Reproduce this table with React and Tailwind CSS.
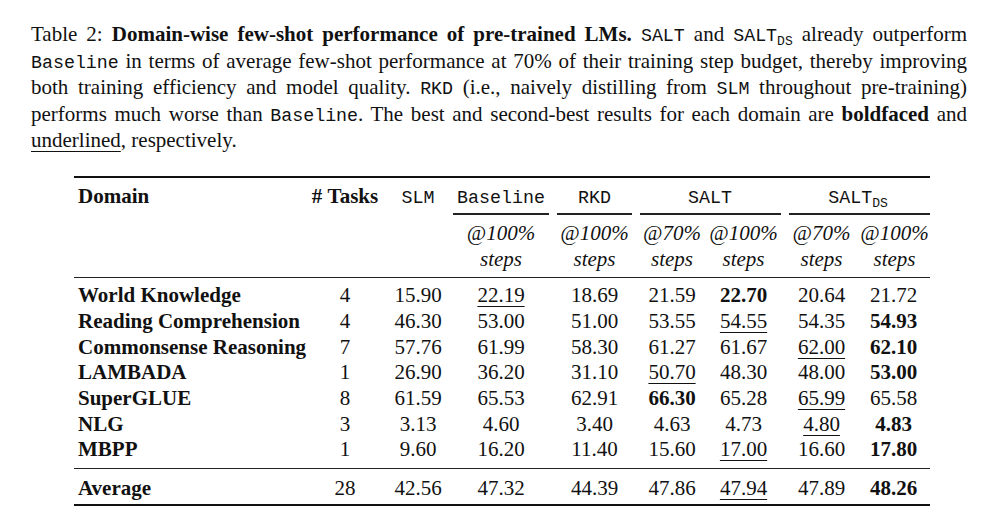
const cols = 'grid grid-cols-[236px_70px_76px_90px_97px_58px_85px_71px_73px]'

const rows = [
  ['World Knowledge', '4', '15.90', ['22.19', 'u'], '18.69', '21.59', ['22.70', 'b'], '20.64', '21.72'],
  ['Reading Comprehension', '4', '46.30', '53.00', '51.00', '53.55', ['54.55', 'u'], '54.35', ['54.93', 'b']],
  ['Commonsense Reasoning', '7', '57.76', '61.99', '58.30', '61.27', '61.67', ['62.00', 'u'], ['62.10', 'b']],
  ['LAMBADA', '1', '26.90', '36.20', '31.10', ['50.70', 'u'], '48.30', '48.00', ['53.00', 'b']],
  ['SuperGLUE', '8', '61.59', '65.53', '62.91', ['66.30', 'b'], '65.28', ['65.99', 'u'], '65.58'],
  ['NLG', '3', '3.13', '4.60', '3.40', '4.63', '4.73', ['4.80', 'u'], ['4.83', 'b']],
  ['MBPP', '1', '9.60', '16.20', '11.40', '15.60', ['17.00', 'u'], '16.60', ['17.80', 'b']],
]

const average = ['Average', '28', '42.56', '47.32', '44.39', '47.86', ['47.94', 'u'], '47.89', ['48.26', 'b']]

const Tt = ({ children }) => (
  <span className="font-['Liberation_Mono',monospace] text-[18.3px] leading-none">{children}</span>
)

const Ds = () => (
  <span className="font-['Liberation_Mono',monospace] text-[13px] leading-none relative top-[4px]">DS</span>
)

const Cell = ({ value }) => {
  if (Array.isArray(value)) {
    const [text, kind] = value
    if (kind === 'b') return <span className="font-bold">{text}</span>
    return <span className="underline decoration-1 underline-offset-[4px]">{text}</span>
  }
  return <span>{value}</span>
}

const Row = ({ row, className = 'h-[25.7px] leading-[25.7px]' }) => (
  <div className={`${cols} ${className}`}>
    <div className="pl-[4px] font-bold whitespace-nowrap">{row[0]}</div>
    {row.slice(1).map((v, i) => (
      <div key={i} className={`text-center ${i === 7 ? 'pl-[2px] pr-[2px]' : ''}`}>
        <Cell value={v} />
      </div>
    ))}
  </div>
)

const Line = ({ children, last }) => (
  <div className={`h-[26.5px] ${last ? 'text-left' : 'text-justify [text-align-last:justify]'}`}>{children}</div>
)

export default function App() {
  return (
    <div className="w-[994px] h-[523px] bg-white text-[#111] font-['Liberation_Serif',serif] overflow-hidden">
      {/* Caption */}
      <div className="pl-[31px] pr-[27px] pt-[21px] text-[21px] leading-[26.5px]">
        <Line>
          Table 2: <b>Domain-wise few-shot performance of pre-trained LMs.</b> <Tt>SALT</Tt> and <Tt>SALT</Tt><Ds /> already outperform
        </Line>
        <Line>
          <Tt>Baseline</Tt> in terms of average few-shot performance at 70% of their training step budget, thereby improving
        </Line>
        <Line>
          both training efficiency and model quality. <Tt>RKD</Tt> (i.e., naively distilling from <Tt>SLM</Tt> throughout pre-training)
        </Line>
        <Line>
          performs much worse than <Tt>Baseline</Tt>. The best and second-best results for each domain are <b>boldfaced</b> and
        </Line>
        <Line last>
          <span className="underline decoration-1 underline-offset-[4px]">underlined</span>, respectively.
        </Line>
      </div>

      {/* Table */}
      <div className="ml-[74px] w-[856px] mt-[22.5px] text-[21px]">
        <div className="h-[2px] bg-[#111]" />

        {/* header line 1 */}
        <div className={`${cols} pt-[5px] pb-[4px] h-[35px] leading-[26px] items-start`}>
          <div className="pl-[4px] font-bold">Domain</div>
          <div className="text-center font-bold whitespace-nowrap">#&nbsp;Tasks</div>
          <div className="text-center"><Tt>SLM</Tt></div>
          <div className="text-center"><Tt>Baseline</Tt></div>
          <div className="text-center"><Tt>RKD</Tt></div>
          <div className="col-span-2 text-center pr-[9px]"><Tt>SALT</Tt></div>
          <div className="col-span-2 text-center"><Tt>SALT</Tt><Ds /></div>
        </div>

        {/* cmidrules */}
        <div className={`${cols} h-[1.5px]`}>
          <div className="col-start-4 ml-[-3px] mr-[-3px] bg-[#222]" />
          <div className="ml-[11px] mr-[11px] bg-[#222]" />
          <div className="col-span-2 ml-[-3px] mr-[5px] bg-[#222]" />
          <div className="col-span-2 ml-[3px] bg-[#222]" />
        </div>

        {/* header lines 2 and 3 */}
        <div className="pt-[5.5px] italic">
          <div className={`${cols} h-[26px] leading-[26px]`}>
            <div className="col-start-4 text-center">@100%</div>
            <div className="text-center">@100%</div>
            <div className="text-center">@70%</div>
            <div className="text-center">@100%</div>
            <div className="text-center">@70%</div>
            <div className="text-center pl-[2px]">@100%</div>
          </div>
          <div className={`${cols} h-[26px] leading-[26px]`}>
            <div className="col-start-4 text-center">steps</div>
            <div className="text-center">steps</div>
            <div className="text-center">steps</div>
            <div className="text-center">steps</div>
            <div className="text-center">steps</div>
            <div className="text-center pl-[2px]">steps</div>
          </div>
        </div>

        <div className="mt-[4.5px] h-px bg-[#222]" />

        <div className="pt-[5.65px]">
          {rows.map((row) => (
            <Row key={row[0]} row={row} />
          ))}
        </div>

        <div className="mt-[5.45px] h-px bg-[#222]" />

        <div className="pt-[5.5px]">
          <Row row={average} className="h-[26px] leading-[26px]" />
        </div>

        <div className="mt-[3px] h-[2px] bg-[#111]" />
      </div>
    </div>
  )
}
